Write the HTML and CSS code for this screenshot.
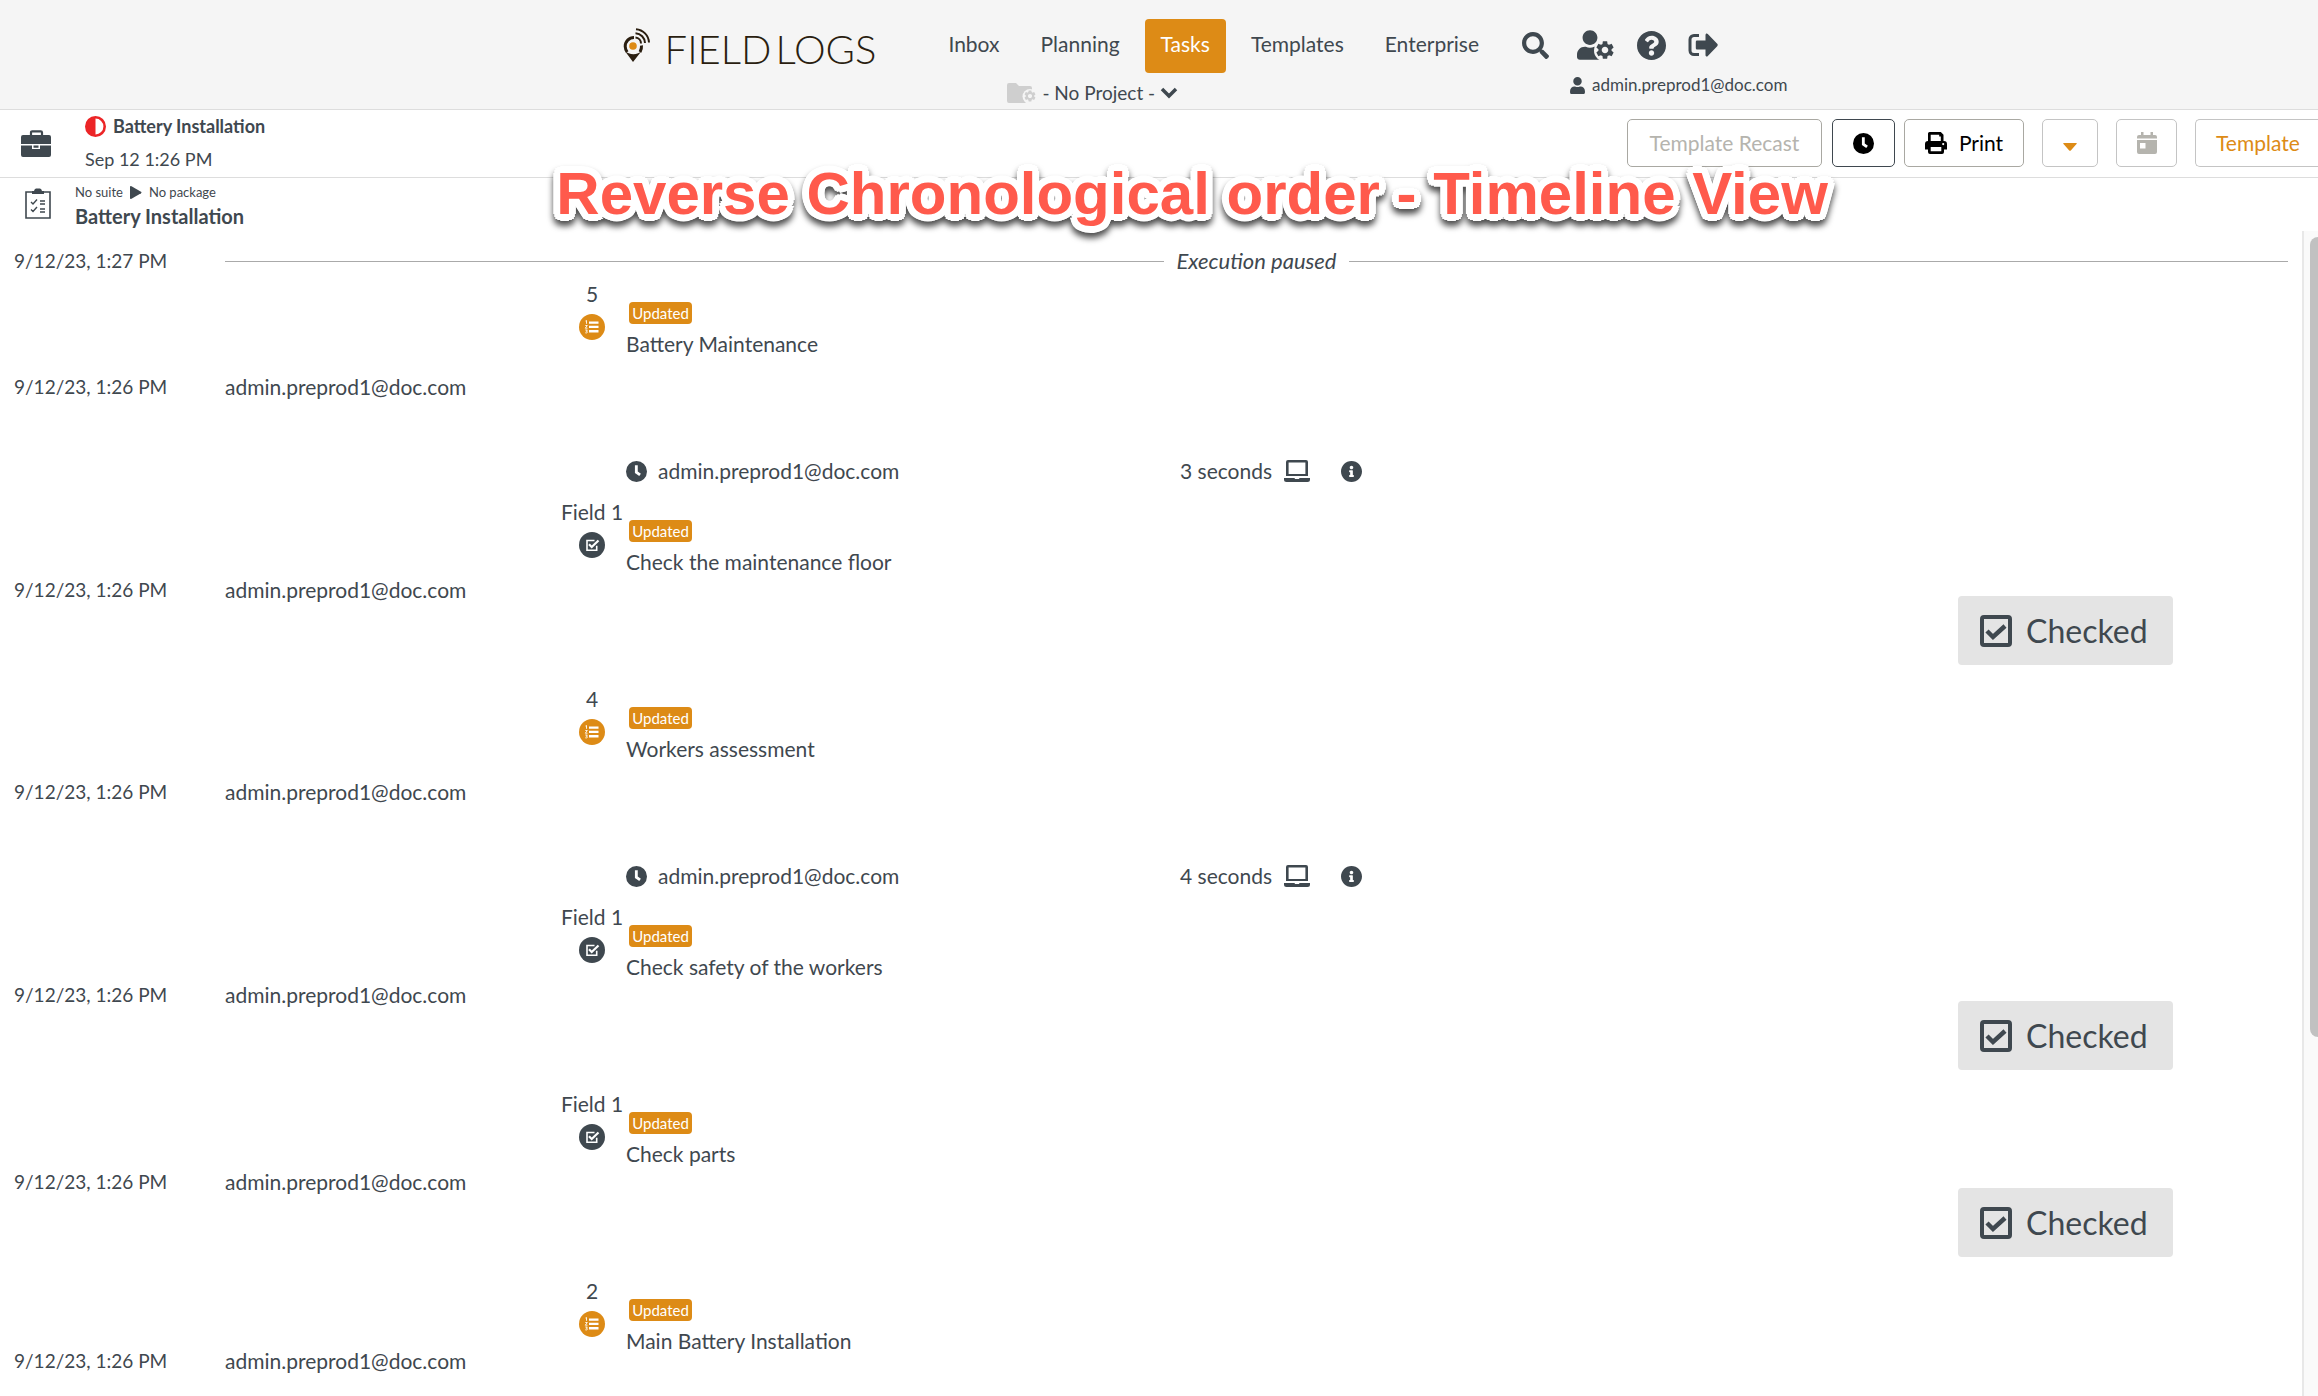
FILE: index.html
```html
<!DOCTYPE html>
<html lang="en">
<head>
    <meta charset="UTF-8">
    <meta name="viewport" content="width=device-width, initial-scale=1.0">
    <title>Field Logs - Battery Installation</title>
    <link rel="stylesheet" href="styles.css">
</head>
<body>
    <!-- shared icons -->
    <svg class="sprite" aria-hidden="true">
        <symbol id="gear" viewBox="0 0 24 24"><path d="M19.14 12.94c.04-.3.06-.61.06-.94 0-.32-.02-.64-.07-.94l2.03-1.58c.18-.14.23-.41.12-.61l-1.92-3.32c-.12-.22-.37-.29-.59-.22l-2.39.96c-.5-.38-1.03-.7-1.62-.94l-.36-2.54c-.04-.24-.24-.41-.48-.41h-3.84c-.24 0-.43.17-.47.41l-.36 2.54c-.59.24-1.13.57-1.62.94l-2.39-.96c-.22-.08-.47 0-.59.22L2.74 8.87c-.12.21-.08.47.12.61l2.03 1.58c-.05.3-.09.63-.09.94s.02.64.07.94l-2.03 1.58c-.18.14-.23.41-.12.61l1.92 3.32c.12.22.37.29.59.22l2.39-.96c.5.38 1.03.7 1.62.94l.36 2.54c.05.24.24.41.48.41h3.84c.24 0 .44-.17.47-.41l.36-2.54c.59-.24 1.13-.56 1.62-.94l2.39.96c.22.08.47 0 .59-.22l1.92-3.32c.12-.22.07-.47-.12-.61l-2.01-1.58zM12 15.6c-1.98 0-3.6-1.62-3.6-3.6s1.62-3.6 3.6-3.6 3.6 1.62 3.6 3.6-1.62 3.6-3.6 3.6z"/></symbol>
        <symbol id="user" viewBox="0 0 448 512"><path d="M224 256c70.7 0 128-57.3 128-128S294.7 0 224 0 96 57.3 96 128s57.3 128 128 128zm89.6 32h-16.7c-22.2 10.2-46.9 16-72.9 16s-50.6-5.8-72.9-16h-16.7C60.2 288 0 348.2 0 422.4V464c0 26.5 21.5 48 48 48h352c26.5 0 48-21.5 48-48v-41.6c0-74.2-60.2-134.4-134.4-134.4z"/></symbol>
        <symbol id="clock" viewBox="0 0 20 20"><path fill-rule="evenodd" d="M10 0a10 10 0 1 0 0 20 10 10 0 0 0 0-20zM8.500 4h2.700v6l3 2.200-1.600 2.200-4.100-3z"/></symbol>
        <symbol id="info" viewBox="8 8 496 496"><path d="M256 8C119.043 8 8 119.083 8 256c0 136.997 111.043 248 248 248s248-111.003 248-248C504 119.083 392.957 8 256 8zm0 110c23.196 0 42 18.804 42 42s-18.804 42-42 42-42-18.804-42-42 18.804-42 42-42zm56 254c0 6.627-5.373 12-12 12h-88c-6.627 0-12-5.373-12-12v-24c0-6.627 5.373-12 12-12h12v-64h-12c-6.627 0-12-5.373-12-12v-24c0-6.627 5.373-12 12-12h64c6.627 0 12 5.373 12 12v100h12c6.627 0 12 5.373 12 12v24z"/></symbol>
        <symbol id="laptop" viewBox="0 0 26 22"><path fill-rule="evenodd" d="M4 0h18a2 2 0 0 1 2 2v14H2V2a2 2 0 0 1 2-2zm.600 2.600v11.400h16.800V2.600zM0 18h10.500l.500 1h4l.500-1H26v1.500a2.500 2.500 0 0 1-2.500 2.500h-21A2.500 2.500 0 0 1 0 19.500z"/></symbol>
        <symbol id="section" viewBox="0 0 26 26"><circle cx="13" cy="13" r="13" fill="#dd8b16"/><path fill="#fff" d="M10 7.500h9.500v2.300H10zm0 4.300h9.500v2.300H10zm0 4.300h9.500v2.300H10z"/><path fill="none" stroke="#fff" stroke-width=".9" d="M6.500 7l1-.5v3.300M6.300 11.500h2l-2 2.700h2.200M6.300 16h2l-1 1.300c2 0 1.300 2.200-1 1.500"/></symbol>
        <symbol id="field" viewBox="0 0 26 26"><circle cx="13" cy="13" r="13" fill="#3f484f"/><path fill="none" stroke="#fff" stroke-width="1.600" d="M15.500 8.500H8v9.700h9.700v-4.500"/><path fill="none" stroke="#fff" stroke-width="2.200" d="M10 12.200l2.700 2.800L19.500 8.500"/></symbol>
    </svg>

    <header class="topbar">
        <a class="logo" href="#">
            <svg width="28" height="34" viewBox="0 0 28 34" fill="none" stroke="#2a1e10">
                <path stroke-width="3" d="M11 9.500a8.800 8.800 0 0 0-8.800 9c0 2 1 4 2 5.500M18.500 17.500c.3 2.500-.4 4.500-1.500 6.500"/>
                <path fill="#2a1e10" stroke="none" d="M1.500 22.500c5 5 13 5 17.500 0L10 34z"/>
                <circle cx="10" cy="18" r="3.800" fill="#dd8b16" stroke="none"/>
                <path stroke-width="2" d="M12.500 9.500a6 6 0 0 1 5.500 6M12.500 5.300a10 10 0 0 1 9.500 9.700M13 1.200a14 14 0 0 1 13 13.300"/>
            </svg>
            <span class="logo-text"><span>FIELD</span><span>LOGS</span></span>
        </a>
        <div class="menu">
            <nav class="nav">
                <a href="#">Inbox</a>
                <a href="#">Planning</a>
                <a href="#" class="active">Tasks</a>
                <a href="#">Templates</a>
                <a href="#">Enterprise</a>
            </nav>
            <div class="project">
                <svg width="30" height="20" viewBox="0 0 30 20">
                    <path d="M2 0h7l3 3h11a2 2 0 0 1 2 2v13a2 2 0 0 1-2 2H2a2 2 0 0 1-2-2V2a2 2 0 0 1 2-2z"/>
                    <circle cx="23" cy="13.500" r="7.500" fill="#f5f5f5"/>
                    <use href="#gear" x="16" y="6" width="14" height="14"/>
                </svg>
                <select aria-label="Project">
                    <option>- No Project -</option>
                </select>
            </div>
        </div>
        <div class="account">
            <div class="tools">
                <button aria-label="Search"><svg width="27" height="27" viewBox="0 0 512 512"><path d="M505 442.700L405.300 343c-4.500-4.500-10.600-7-17-7H372c27.600-35.300 44-79.700 44-128C416 93.100 322.900 0 208 0S0 93.100 0 208s93.100 208 208 208c48.300 0 92.700-16.400 128-44v16.300c0 6.400 2.500 12.500 7 17l99.700 99.700c9.400 9.400 24.600 9.400 33.900 0l28.300-28.300c9.400-9.400 9.400-24.600.1-34zM208 336c-70.700 0-128-57.200-128-128 0-70.700 57.200-128 128-128 70.700 0 128 57.200 128 128 0 70.700-57.200 128-128 128z"/></svg></button>
                <button aria-label="User settings"><svg width="38" height="30" viewBox="0 0 38 30"><use href="#user" width="26" height="30"/><circle cx="28" cy="20.500" r="11" fill="#f5f5f5"/><use href="#gear" x="17" y="9" width="22" height="22"/></svg></button>
                <button aria-label="Help"><svg width="29" height="29" viewBox="8 8 496 496"><path d="M504 256c0 136.997-111.043 248-248 248S8 392.997 8 256C8 119.083 119.043 8 256 8s248 111.083 248 248zM262.655 90c-54.497 0-89.255 22.957-116.549 63.758-3.536 5.286-2.353 12.415 2.715 16.258l34.699 26.310c5.205 3.947 12.621 3.008 16.665-2.122 17.864-22.658 30.113-35.797 57.303-35.797 20.429 0 45.698 13.148 45.698 32.958 0 14.976-12.363 22.667-32.534 33.976C247.128 238.528 216 254.941 216 296v4c0 6.627 5.373 12 12 12h56c6.627 0 12-5.373 12-12v-1.333c0-28.462 83.186-29.647 83.186-106.667 0-58.002-60.165-102-116.531-102zM256 338c-25.365 0-46 20.635-46 46 0 25.364 20.635 46 46 46s46-20.636 46-46c0-25.365-20.635-46-46-46z"/></svg></button>
                <button aria-label="Sign out"><svg width="30" height="24" viewBox="0 0 30 24"><path fill="none" stroke="#3f484f" stroke-width="3" d="M11 2.500H6A4 4 0 0 0 2 6.500v11a4 4 0 0 0 4 4h5"/><path d="M9 7.500h8.500V2c0-1.500 1.400-2 2.300-1l9.400 9.800c.7.700.7 1.700 0 2.400L19.800 23c-.9 1-2.300.5-2.300-1v-5.500H9a1.200 1.200 0 0 1-1.200-1.200V8.700A1.200 1.200 0 0 1 9 7.500z"/></svg></button>
            </div>
            <div class="whoami">
                <svg width="15" height="17"><use href="#user"/></svg>
                <span>admin.preprod1@doc.com</span>
            </div>
        </div>
    </header>

    <section class="taskbar">
        <svg class="briefcase" width="30" height="27" viewBox="0 0 30 27"><path fill="none" stroke="#3f484f" stroke-width="2.200" d="M10 6V2.600Q10 1.300 11.300 1.300h8.400q1.300 0 1.300 1.300V6"/><path d="M2 5h26a2 2 0 0 1 2 2v7H0V7a2 2 0 0 1 2-2zM0 15.500h11V19h8v-3.500h11V25a2 2 0 0 1-2 2H2a2 2 0 0 1-2-2zM12.500 15.500h5v2.200h-5z"/></svg>
        <div class="task-name">
            <div class="task-title">
                <svg width="21" height="21" viewBox="0 0 21 21"><circle cx="10.500" cy="10.500" r="9.200" fill="#fff" stroke="#ec2527" stroke-width="2.600"/><path fill="#ec2527" d="M10.500 1v19a9.500 9.500 0 0 1 0-19z"/></svg>
                <strong>Battery Installation</strong>
            </div>
            <div class="task-date">Sep 12 1:26 PM</div>
        </div>
        <div class="actions">
            <button class="btn recast" disabled>Template Recast</button>
            <button class="btn history" aria-label="History"><svg width="21" height="21"><use href="#clock"/></svg></button>
            <button class="btn print">
                <svg width="22" height="22" viewBox="0 0 22 22"><path fill-rule="evenodd" d="M4.500 0h11.300L18.500 2.700V9h.5a3 3 0 0 1 3 3v5.500h-3V20a2 2 0 0 1-2 2H5a2 2 0 0 1-2-2v-2.500H0V12a3 3 0 0 1 3-3V1.500A1.500 1.500 0 0 1 4.500 0zM5.700 2.700V9h10.100V4.500h-1.600V2.700zM5.700 15v4.300h10.600V15zM18.200 11a1.100 1.100 0 1 0 0 2.200 1.100 1.100 0 0 0 0-2.200z"/></svg>
                Print
            </button>
            <button class="btn more" aria-label="More"><svg width="14" height="8" viewBox="0 0 14 8"><path fill="#dd8b16" d="M1 0h12q1.500 0 .5 1L8 7.300q-1 1-2 0L.5 1Q-.5 0 1 0z"/></svg></button>
            <button class="btn calendar" aria-label="Calendar" disabled><svg width="20" height="22" viewBox="0 0 20 22"><path d="M4 0h2.500v3h7V0H16v3h2a2 2 0 0 1 2 2v1.500H0V5a2 2 0 0 1 2-2h2z"/><path fill-rule="evenodd" d="M0 8h20v12a2 2 0 0 1-2 2H2a2 2 0 0 1-2-2zm3 3v5.500h5.500V11z"/></svg></button>
            <button class="btn template">Template</button>
        </div>
    </section>

    <section class="procedure">
        <svg width="26" height="31" viewBox="0 0 26 31" fill="none" stroke="#3f484f"><path stroke-width="1.600" d="M1 4h24v26H1z"/><path fill="#3f484f" stroke="none" d="M7 3h2q.5-2.500 2-2.500h4q1.500 0 2 2.500h2v3H7z"/><path stroke-width="1.400" d="M6 14l2 2 4-4.500M15 13h5M15 16h5M6 21.500l2 2 4-4.500M15 21h5M15 24h5"/></svg>
        <div>
            <div class="path">No suite <svg width="12" height="13" viewBox="0 0 12 13"><path d="M1.500.3L11 5.800q1 .7 0 1.400L1.500 12.700Q0 13.300 0 12V1Q0-.3 1.500.3z"/></svg> No package</div>
            <strong>Battery Installation</strong>
        </div>
    </section>

    <div class="banner">Reverse Chronological order - Timeline View</div>

    <main class="view">
        <div class="timeline">
            <div class="event">
                <time>9/12/23, 1:27 PM</time>
                <div class="divider"><em>Execution paused</em></div>
            </div>

            <article class="row">
                <time>9/12/23, 1:26 PM</time>
                <span class="user">admin.preprod1@doc.com</span>
                <div class="marker"><span>5</span><svg width="26" height="26"><use href="#section"/></svg></div>
                <div class="content">
                    <span class="badge">Updated</span>
                    <p>Battery Maintenance</p>
                    <div class="spent">
                        <span class="who"><svg width="21" height="21"><use href="#clock"/></svg>admin.preprod1@doc.com</span>
                        <span>3 seconds</span>
                        <svg class="device" width="26" height="22"><use href="#laptop"/></svg>
                        <svg class="details" width="21" height="21"><use href="#info"/></svg>
                    </div>
                </div>
            </article>

            <article class="row">
                <time>9/12/23, 1:26 PM</time>
                <span class="user">admin.preprod1@doc.com</span>
                <div class="marker"><span>Field 1</span><svg width="26" height="26"><use href="#field"/></svg></div>
                <div class="content">
                    <span class="badge">Updated</span>
                    <p>Check the maintenance floor</p>
                    <label class="answer"><input type="checkbox" checked>Checked</label>
                </div>
            </article>

            <article class="row">
                <time>9/12/23, 1:26 PM</time>
                <span class="user">admin.preprod1@doc.com</span>
                <div class="marker"><span>4</span><svg width="26" height="26"><use href="#section"/></svg></div>
                <div class="content">
                    <span class="badge">Updated</span>
                    <p>Workers assessment</p>
                    <div class="spent">
                        <span class="who"><svg width="21" height="21"><use href="#clock"/></svg>admin.preprod1@doc.com</span>
                        <span>4 seconds</span>
                        <svg class="device" width="26" height="22"><use href="#laptop"/></svg>
                        <svg class="details" width="21" height="21"><use href="#info"/></svg>
                    </div>
                </div>
            </article>

            <article class="row">
                <time>9/12/23, 1:26 PM</time>
                <span class="user">admin.preprod1@doc.com</span>
                <div class="marker"><span>Field 1</span><svg width="26" height="26"><use href="#field"/></svg></div>
                <div class="content">
                    <span class="badge">Updated</span>
                    <p>Check safety of the workers</p>
                    <label class="answer"><input type="checkbox" checked>Checked</label>
                </div>
            </article>

            <article class="row">
                <time>9/12/23, 1:26 PM</time>
                <span class="user">admin.preprod1@doc.com</span>
                <div class="marker"><span>Field 1</span><svg width="26" height="26"><use href="#field"/></svg></div>
                <div class="content">
                    <span class="badge">Updated</span>
                    <p>Check parts</p>
                    <label class="answer"><input type="checkbox" checked>Checked</label>
                </div>
            </article>

            <article class="row short">
                <time>9/12/23, 1:26 PM</time>
                <span class="user">admin.preprod1@doc.com</span>
                <div class="marker"><span>2</span><svg width="26" height="26"><use href="#section"/></svg></div>
                <div class="content">
                    <span class="badge">Updated</span>
                    <p>Main Battery Installation</p>
                </div>
            </article>
        </div>
        <div class="scrollbar"><div class="thumb"></div></div>
    </main>
</body>
</html>
```

FILE: styles.css
```css
* {
    box-sizing: border-box;
}
body {
    display: flex;
    flex-direction: column;
    height: 100vh;
    margin: 0;
    overflow: hidden;
    background-color: #fff;
    color: #3f484f;
    font-family: Lato, "Open Sans", sans-serif;
    font-size: 21px;
    line-height: 24px;
}
svg {
    display: block;
    flex: none;
    fill: #3f484f;
}
svg[fill="none"] {
    fill: none;
}
button, select {
    font: inherit;
    color: inherit;
    background: none;
    border: none;
    padding: 0;
}
.sprite {
    position: absolute;
    width: 0;
    height: 0;
}

/* top bar */
.topbar {
    display: flex;
    justify-content: center;
    height: 110px;
    flex: none;
    padding-left: 92px;
    background-color: #f5f5f5;
    border-bottom: 1px solid #ddd;
}
.logo {
    display: flex;
    align-items: center;
    gap: 14px;
    height: 58px;
    margin: 16px 56px 0 0;
    color: #2a1e10;
    text-decoration: none;
}
.logo-text {
    display: flex;
    gap: 4px;
    padding-top: 8px;
    font-size: 40px;
    font-weight: 300;
    line-height: 50px;
}
.nav {
    display: flex;
    gap: 9px;
    padding-top: 19px;
}
.nav a {
    height: 54px;
    padding: 13px 16px;
    border-radius: 4px;
    color: #3f484f;
    text-decoration: none;
}
.nav .active {
    background-color: #dd8b16;
    color: #fff;
}
.project {
    display: flex;
    align-items: center;
    gap: 5px;
    margin: 8px 0 0 75px;
}
.project svg {
    fill: #cfcfcf;
}
.project select {
    width: 136px;
    appearance: none;
    background: url("data:image/svg+xml,%3Csvg xmlns='http://www.w3.org/2000/svg' width='18' height='12'%3E%3Cpath d='M2 2l7 7 7-7' fill='none' stroke='%233f484f' stroke-width='3.500'/%3E%3C/svg%3E") no-repeat right center;
    font-size: 19px;
}
.account {
    margin-left: 27px;
}
.tools {
    display: flex;
    align-items: center;
    gap: 22px;
    height: 30px;
    margin-top: 30px;
}
.tools button:first-child {
    margin-right: 6px;
}
.whoami {
    display: flex;
    align-items: center;
    gap: 7px;
    margin: 13px 0 0 48px;
    font-size: 17px;
}

/* task bar */
.taskbar {
    display: flex;
    flex: none;
    height: 68px;
    padding-left: 21px;
    border-bottom: 1px solid #ddd;
}
.briefcase {
    margin-top: 20px;
}
.task-name {
    margin-left: 34px;
    padding-top: 4px;
    font-size: 18px;
}
.task-title {
    display: flex;
    align-items: center;
    gap: 7px;
}
.task-date {
    padding-top: 9px;
}
.actions {
    display: flex;
    flex: none;
    margin: 9px 0 0 auto;
}
.btn {
    display: flex;
    align-items: center;
    justify-content: center;
    gap: 12px;
    height: 48px;
    border: 1px solid #c4c4c4;
    border-radius: 5px;
    background-color: #fff;
}
.recast {
    width: 195px;
    margin-right: 10px;
    color: #b5b4ae;
    border-color: #a9a8a2;
}
.history {
    width: 63px;
    margin-right: 9px;
    border-color: #3f484f;
}
.print {
    width: 120px;
    margin-right: 18px;
    border-color: #a9a8a2;
    color: #000;
}
.history svg, .print svg {
    fill: #000;
}
.more {
    width: 56px;
    padding-top: 8px;
    margin-right: 18px;
}
.calendar {
    width: 61px;
    margin-right: 18px;
}
.calendar svg {
    fill: #b5b4ae;
}
.template {
    width: 123px;
    padding-left: 20px;
    justify-content: flex-start;
    border-right: none;
    border-radius: 5px 0 0 5px;
    color: #dd8b16;
}

/* procedure */
.procedure {
    display: flex;
    flex: none;
    gap: 24px;
    height: 53px;
    padding-left: 25px;
}
.procedure > svg {
    margin-top: 10px;
}
.procedure strong {
    font-size: 20px;
}
.path {
    display: flex;
    align-items: center;
    gap: 7px;
    padding-top: 2px;
    font-size: 13px;
}

.banner {
    position: absolute;
    top: 160px;
    left: 24%;
    font-family: "Liberation Sans", Arial, sans-serif;
    font-size: 60px;
    font-weight: bold;
    line-height: 68px;
    white-space: nowrap;
    color: #ff5a4c;
    /* white outline with round corners */
    text-shadow:
        7px 0 #fff, 6px 3px #fff, 5px 5px #fff, 3px 6px #fff,
        0 7px #fff, -3px 6px #fff, -5px 5px #fff, -6px 3px #fff,
        -7px 0 #fff, -6px -3px #fff, -5px -5px #fff, -3px -6px #fff,
        0 -7px #fff, 3px -6px #fff, 5px -5px #fff, 6px -3px #fff,
        3px 0 #fff, -3px 0 #fff, 0 3px #fff, 0 -3px #fff;
    filter: drop-shadow(0 5px 3px rgba(0, 0, 0, 0.7));
}

/* timeline */
.view {
    display: flex;
    flex: 1;
    min-height: 0;
}
.timeline {
    flex: 1;
    overflow: hidden;
    padding: 18px 0 0 14px;
}
.timeline time {
    font-size: 19px;
}
.event {
    display: grid;
    grid-template-columns: 211px 1fr;
    padding: 0 14px 5px 0;
}
.divider {
    display: flex;
    align-items: center;
    gap: 12px;
    font-size: 22px;
}
.divider::before, .divider::after {
    content: "";
    flex: 1;
    border-top: 1px solid #aaa;
}
.row {
    display: grid;
    grid-template-columns: 211px 337px 60px 1fr;
    align-items: center;
    min-height: 187px;
}
.marker, .content {
    align-self: start;
}
.marker {
    display: flex;
    flex-direction: column;
    align-items: center;
    gap: 8px;
    padding-top: 4px;
    white-space: nowrap;
}
.content {
    padding: 24px 129px 0 4px;
}
.badge {
    display: block;
    width: 63px;
    margin-left: 3px;
    border-radius: 4px;
    background-color: #dd8b16;
    color: #fff;
    font-size: 15px;
    line-height: 22px;
    text-align: center;
}
.content p {
    margin: 8px 0 0;
}
.spent {
    display: flex;
    align-items: center;
    height: 24px;
    margin: 103px 0 13px;
}
.who {
    display: flex;
    align-items: center;
    gap: 11px;
    width: 554px;
}
.device {
    margin-left: 12px;
}
.details {
    margin-left: 31px;
}
.answer {
    display: flex;
    align-items: center;
    gap: 14px;
    width: 215px;
    height: 69px;
    margin: 22px 0 0 auto;
    padding-left: 22px;
    border-radius: 4px;
    background-color: #e4e4e4;
    font-size: 32px;
}
.answer input {
    width: 32px;
    height: 32px;
    margin: 0;
    appearance: none;
    border: 4px solid #3f484f;
    border-radius: 4px;
    background: url("data:image/svg+xml,%3Csvg xmlns='http://www.w3.org/2000/svg' width='24' height='24'%3E%3Cpath d='M3 12l6 6L21 7' fill='none' stroke='%233f484f' stroke-width='4.500'/%3E%3C/svg%3E") center no-repeat;
}
.short {
    min-height: 172px;
}
.scrollbar {
    width: 16px;
    padding: 6px 0 0 6px;
    border-left: 2px solid #e8e8e8;
    background-color: #fafafa;
}
.thumb {
    height: 69%;
    border-radius: 8px 0 0 8px;
    background-color: #c1c1c1;
}
```
